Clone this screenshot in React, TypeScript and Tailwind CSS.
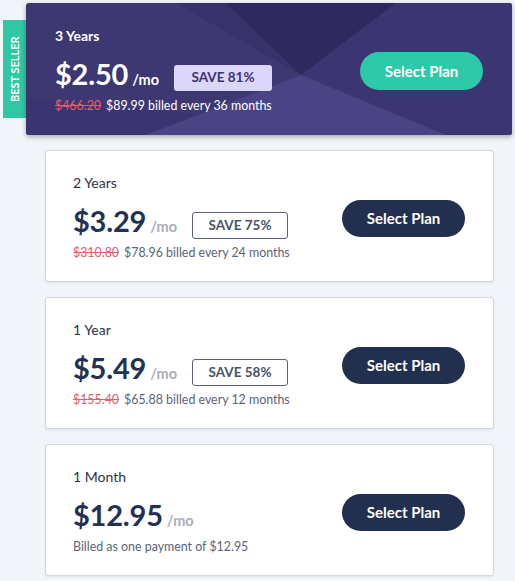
import React from "react";

type Plan = {
  title: string;
  price: string;
  save?: string;
  old?: string;
  billed: string;
};

const plans: Plan[] = [
  { title: "2 Years", price: "$3.29", save: "SAVE 75%", old: "$310.80", billed: "$78.96 billed every 24 months" },
  { title: "1 Year", price: "$5.49", save: "SAVE 58%", old: "$155.40", billed: "$65.88 billed every 12 months" },
  { title: "1 Month", price: "$12.95", billed: "Billed as one payment of $12.95" },
];

function PlanCard({ p }: { p: Plan }) {
  return (
    <div className="ml-[45px] w-[449px] h-[132px] bg-white border border-[#d3d7dd] rounded-[3px] shadow-[0_1px_2px_rgba(0,0,0,0.08)] flex items-center justify-between pl-[27px] pr-[28px]">
      <div className="flex flex-col pt-[3px]">
        <div className="text-[14px] leading-[20px] text-[#2c3345]">{p.title}</div>
        <div className="flex items-center mt-[11px] h-[34px]">
          <div className="flex items-baseline">
            <span className="text-[29px] leading-[34px] font-bold text-[#243152] tracking-[-0.2px]">{p.price}</span>
            <span className="ml-[4px] text-[14.5px] font-bold text-[#a9adb7]">/mo</span>
          </div>
          {p.save && (
            <div className="ml-[15px] mt-[8px] w-[96px] h-[27px] border border-[#5a6275] rounded-[3px] flex items-center justify-center text-[13.5px] font-bold text-[#4a5369]">
              {p.save}
            </div>
          )}
        </div>
        <div className="mt-[6px] text-[12.4px] leading-[18px] text-[#5b6478]">
          {p.old && <span className="line-through text-[#e2606c] mr-[5px]">{p.old}</span>}
          {p.billed}
        </div>
      </div>
      <button className="w-[123px] h-[37px] rounded-full bg-[#232f4e] text-white text-[15px] font-bold mt-[5px]">
        Select Plan
      </button>
    </div>
  );
}

export default function App() {
  return (
    <div
      className="w-[515px] h-[581px] bg-[#f1f4f8] pt-[3px] overflow-hidden relative"
      style={{ fontFamily: "Lato, 'Noto Sans', sans-serif" }}
    >
      <div className="absolute left-[3px] top-[20px] w-[23px] h-[98px] bg-[#31c7a4] flex items-center justify-center">
        <span className="-rotate-90 whitespace-nowrap text-white text-[11px] font-bold">BEST SELLER</span>
      </div>
      <div className="ml-[26px] w-[486px] h-[132px] rounded-[3px] bg-[#3d3772] relative overflow-hidden shadow-[0_2px_5px_rgba(0,0,0,0.3)] flex items-center justify-between pl-[29px] pr-[29px]">
        <svg className="absolute inset-0" width="486" height="132" viewBox="0 0 486 132">
          <path d="M0 95 Q 180 125 486 100 L486 132 L0 132 Z" fill="#3a3470" />
          <polygon points="200,0 370,0 275,72" fill="#2e295f" />
          <polygon points="370,0 486,0 486,132 420,132 275,72" fill="#3b3571" />
          <polygon points="120,132 275,72 420,132" fill="#4a4484" />
          <polygon points="275,72 200,0 150,0" fill="#332e66" opacity="0.6" />
        </svg>
        <div className="flex flex-col relative pt-[2px]">
          <div className="text-[14px] leading-[20px] text-white font-bold">3 Years</div>
          <div className="flex items-center mt-[11px] h-[34px]">
            <div className="flex items-baseline">
              <span className="text-[29px] leading-[34px] font-bold text-white tracking-[-0.2px]">$2.50</span>
              <span className="ml-[4px] text-[14.5px] font-bold text-white">/mo</span>
            </div>
            <div className="ml-[15px] mt-[8px] w-[98px] h-[26px] bg-[#dcd6fa] rounded-[3px] flex items-center justify-center text-[13.5px] font-bold text-[#3a3570]">
              SAVE 81%
            </div>
          </div>
          <div className="mt-[6px] text-[12.4px] leading-[18px] text-white">
            <span className="line-through text-[#f2566f] mr-[5px]">$466.20</span>
            $89.99 billed every 36 months
          </div>
        </div>
        <button className="relative w-[123px] h-[38px] rounded-full bg-[#2ec9a7] text-white text-[15px] font-bold mt-[4px]">
          Select Plan
        </button>
      </div>
      <div className="flex flex-col gap-[15px] mt-[15px]">
        {plans.map((p) => (
          <PlanCard key={p.title} p={p} />
        ))}
      </div>
    </div>
  );
}
